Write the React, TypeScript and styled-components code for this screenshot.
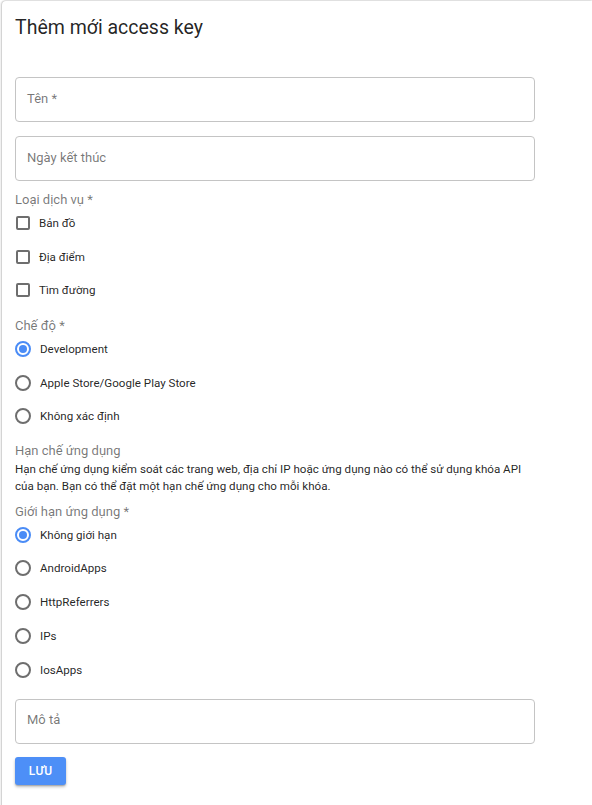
import React from "react";
import styled, { createGlobalStyle } from "styled-components";

const Global = createGlobalStyle`
  html, body { margin: 0; padding: 0; background: #ffffff; }
  body { font-family: Roboto, "Liberation Sans", Arial, sans-serif; }
  * { box-sizing: border-box; }
`;

const Page = styled.div`
  padding: 1px 0 0 2px;
  min-height: 805px;
  background: #ffffff;
`;

const Card = styled.div`
  background: #fff;
  border-top-left-radius: 4px;
  box-shadow: -1px 0 2px rgba(0, 0, 0, 0.22), 0 -1px 1px rgba(0, 0, 0, 0.08);
  min-height: 804px;
  padding: 11px 0 30px 13px;
`;

const Title = styled.h2`
  margin: 0;
  font-size: 19.5px;
  line-height: 32px;
  font-weight: 400;
  color: rgba(0, 0, 0, 0.87);
`;

const Form = styled.div`
  width: 520px;
  display: flex;
  flex-direction: column;
`;

const Field = styled.div<{ $mt: number }>`
  margin-top: ${(p) => p.$mt}px;
  height: 45px;
  border: 1px solid #c4c4c4;
  border-radius: 4px;
  display: flex;
  align-items: center;
  padding: 0 0 3px 11px;
  font-size: 13px;
  color: rgba(0, 0, 0, 0.54);
`;

const Section = styled.div<{ $mt: number }>`
  margin-top: ${(p) => p.$mt}px;
  display: flex;
  flex-direction: column;
`;

const GroupLabel = styled.div`
  font-size: 13px;
  line-height: 16px;
  color: rgba(0, 0, 0, 0.54);
`;

const Options = styled.div`
  margin-top: 3px;
  display: flex;
  flex-direction: column;
  gap: 9.7px;
`;

const Option = styled.label`
  height: 24px;
  display: flex;
  align-items: center;
  gap: 9px;
  font-size: 11.6px;
  color: rgba(0, 0, 0, 0.87);
`;

const Box = styled.span`
  width: 14px;
  height: 14px;
  margin-left: 1px;
  border: 2px solid #6e6e6e;
  border-radius: 2px;
  flex: none;
`;

const Radio = styled.span<{ $on?: boolean }>`
  width: 16px;
  height: 16px;
  border-radius: 50%;
  border: 2px solid ${(p) => (p.$on ? "#4a8cf6" : "#6e6e6e")};
  display: flex;
  align-items: center;
  justify-content: center;
  flex: none;
  &::after {
    content: "";
    width: 8px;
    height: 8px;
    border-radius: 50%;
    background: ${(p) => (p.$on ? "#4a8cf6" : "transparent")};
  }
`;

const Desc = styled.p`
  margin: 2px 0 0;
  font-size: 11.6px;
  line-height: 17px;
  color: rgba(0, 0, 0, 0.87);
`;

const Button = styled.button`
  margin-top: 13px;
  align-self: flex-start;
  width: 51px;
  height: 28px;
  border: none;
  border-radius: 3px;
  background: #4d8ff7;
  color: #fff;
  font-family: Roboto, "Liberation Sans", Arial, sans-serif;
  font-size: 12px;
  font-weight: 500;
  letter-spacing: 0.3px;
  box-shadow: 0 2px 3px rgba(0, 0, 0, 0.25), 0 1px 1px rgba(0, 0, 0, 0.14);
`;

const CheckOpt = ({ label }: { label: string }) => (
  <Option>
    <Box />
    {label}
  </Option>
);

const RadioOpt = ({ label, on }: { label: string; on?: boolean }) => (
  <Option>
    <Radio $on={on} />
    {label}
  </Option>
);

export default function App() {
  return (
    <>
      <Global />
      <Page>
        <Card>
          <Title>Thêm mới access key</Title>
          <Form>
            <Field $mt={33}>Tên *</Field>
            <Field $mt={14}>Ngày kết thúc</Field>
            <Section $mt={11}>
              <GroupLabel>Loại dịch vụ *</GroupLabel>
              <Options>
                <CheckOpt label="Bản đồ" />
                <CheckOpt label="Địa điểm" />
                <CheckOpt label="Tìm đường" />
              </Options>
            </Section>
            <Section $mt={15.5}>
              <GroupLabel>Chế độ *</GroupLabel>
              <Options>
                <RadioOpt label="Development" on />
                <RadioOpt label="Apple Store/Google Play Store" />
                <RadioOpt label="Không xác định" />
              </Options>
            </Section>
            <Section $mt={15}>
              <GroupLabel>Hạn chế ứng dụng</GroupLabel>
              <Desc>
                Hạn chế ứng dụng kiểm soát các trang web, địa chỉ IP hoặc ứng dụng nào có thể sử dụng khóa API của bạn. Bạn có thể đặt một hạn chế ứng dụng cho mỗi khóa.
              </Desc>
            </Section>
            <Section $mt={8.5}>
              <GroupLabel>Giới hạn ứng dụng *</GroupLabel>
              <Options>
                <RadioOpt label="Không giới hạn" on />
                <RadioOpt label="AndroidApps" />
                <RadioOpt label="HttpReferrers" />
                <RadioOpt label="IPs" />
                <RadioOpt label="IosApps" />
              </Options>
            </Section>
            <Field $mt={17}>Mô tả</Field>
            <Button>LƯU</Button>
          </Form>
        </Card>
      </Page>
    </>
  );
}
